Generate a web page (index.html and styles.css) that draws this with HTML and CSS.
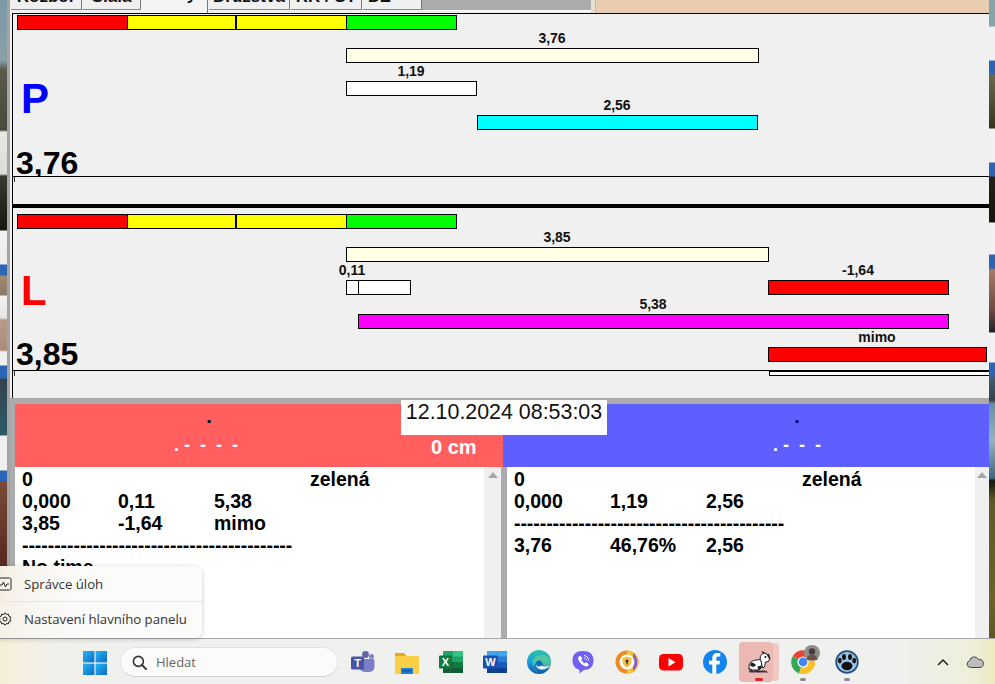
FILE: index.html
```html
<!DOCTYPE html>
<html lang="cs">
<head>
<meta charset="utf-8">
<title>Grafy</title>
<link rel="stylesheet" href="styles.css">
</head>
<body>
<div class="desktop">
  <div class="screen">
    <div class="wall wall-left"></div>
    <div class="app">
      <div class="tabs">
        <div class="tab t1">Rozbor</div>
        <div class="tab t2">Síala</div>
        <div class="tab t3 active">Grafy</div>
        <div class="tab t4">Družstva</div>
        <div class="tab t5">RR / ST</div>
        <div class="tab t6">DZ</div>
        <div class="tabs-fill"></div>
        <div class="tabs-grip"></div>
        <div class="tabs-peach"></div>
      </div>

      <section class="panel panel-p">
        <div class="gauge">
          <div class="g g-red"></div><div class="g g-yel1"></div><div class="g g-yel2"></div><div class="g g-grn"></div>
        </div>
        <div class="body">
          <div class="side">
            <div class="letter blue">P</div>
            <div class="value">3,76</div>
          </div>
          <div class="chart">
            <div class="row">
              <div class="seg" style="width:413px"><span class="lab">3,76</span><span class="bar cream"></span></div>
            </div>
            <div class="row">
              <div class="seg" style="width:131px"><span class="lab">1,19</span><span class="bar white"></span></div>
            </div>
            <div class="row tall">
              <div class="seg" style="margin-left:131px;width:281px"><span class="lab">2,56</span><span class="bar cyan"></span></div>
            </div>
          </div>
        </div>
        <div class="rule"><span class="tick"></span></div>
      </section>

      <div class="divider"></div>

      <section class="panel panel-l">
        <div class="gauge">
          <div class="g g-red"></div><div class="g g-yel1"></div><div class="g g-yel2"></div><div class="g g-grn"></div>
        </div>
        <div class="body">
          <div class="side">
            <div class="letter red">L</div>
            <div class="value">3,85</div>
          </div>
          <div class="chart">
            <div class="row">
              <div class="seg" style="width:423px"><span class="lab">3,85</span><span class="bar cream"></span></div>
            </div>
            <div class="row">
              <div class="seg" style="width:13px"><span class="lab">0,11</span><span class="bar white"></span></div>
              <div class="seg" style="margin-left:-1px;width:53px"><span class="lab"></span><span class="bar white"></span></div>
              <div class="seg" style="margin-left:357px;width:181px"><span class="lab">-1,64</span><span class="bar redbar"></span></div>
            </div>
            <div class="row tall">
              <div class="seg" style="margin-left:12px;width:591px"><span class="lab">5,38</span><span class="bar magenta"></span></div>
            </div>
            <div class="row">
              <div class="seg" style="margin-left:422px;width:219px"><span class="lab">mimo</span><span class="bar redbar"></span></div>
            </div>
          </div>
        </div>
        <div class="rule"><span class="tick"></span><span class="rule-bar"></span></div>
      </section>

      <div class="lower">
        <div class="heads">
          <div class="head head-red">
            <div class="h-dot">.</div>
            <div class="h-dash dash-red"><span>.</span><span class="dash-run">- - - -</span></div>
            <div class="h-cm">0 cm</div>
          </div>
          <div class="head head-blue">
            <div class="h-dot navy">.</div>
            <div class="h-dash"><span>.</span><span class="dash-run">- - -</span></div>
          </div>
        </div>
        <div class="panes">
          <div class="pane pane-left">
            <div class="txt">
              <div class="ln"><span>0</span><span></span><span></span><span>zelená</span></div>
              <div class="ln"><span>0,000</span><span>0,11</span><span>5,38</span></div>
              <div class="ln"><span>3,85</span><span>-1,64</span><span>mimo</span></div>
              <div class="ln"><span class="wide sep">------------------------------------------</span></div>
              <div class="ln"><span class="wide">No time</span></div>
            </div>
            <div class="scroll"><i class="arrow"></i></div>
          </div>
          <div class="pane pane-right">
            <div class="txt">
              <div class="ln"><span>0</span><span></span><span></span><span>zelená</span></div>
              <div class="ln"><span>0,000</span><span>1,19</span><span>2,56</span></div>
              <div class="ln"><span class="wide sep">------------------------------------------</span></div>
              <div class="ln"><span>3,76</span><span>46,76%</span><span>2,56</span></div>
            </div>
            <div class="scroll"><i class="arrow"></i></div>
          </div>
        </div>
      </div>

      <div class="clock">12.10.2024 08:53:03</div>
    </div>
    <div class="wall wall-right"></div>
  </div>

  <div class="taskbar">
    <svg class="win" viewBox="0 0 24 24">
      <defs>
        <linearGradient id="wg" x1="0" y1="0" x2="1" y2="1"><stop offset="0" stop-color="#29b6f6"/><stop offset="1" stop-color="#0a6cc4"/></linearGradient>
      </defs>
      <rect x="0" y="0" width="11.4" height="11.4" fill="url(#wg)"/>
      <rect x="12.6" y="0" width="11.4" height="11.4" fill="url(#wg)"/>
      <rect x="0" y="12.6" width="11.4" height="11.4" fill="url(#wg)"/>
      <rect x="12.6" y="12.6" width="11.4" height="11.4" fill="url(#wg)"/>
    </svg>
    <div class="search">
      <svg class="mag" viewBox="0 0 16 16"><circle cx="6.8" cy="6.8" r="5.3" fill="none" stroke="#333" stroke-width="1.7"/><path d="M10.7 10.7L15 15" stroke="#333" stroke-width="2" stroke-linecap="round"/></svg>
      <span class="search-text">Hledat</span>
    </div>
    <div class="apps">
      <div class="app-ico">
        <svg viewBox="0 0 24 24"><circle cx="14.5" cy="4.5" r="3.4" fill="#6264a7"/><circle cx="20.5" cy="6.5" r="2.5" fill="#7b83c9"/><path d="M8 9h13.5a2 2 0 0 1 2 2v6a5 5 0 0 1-5 5h-5a6 6 0 0 1-5.500-6z" fill="#7b7fc9"/><rect x="0" y="6.500" width="13" height="13" rx="1.500" fill="#4b53a8"/><text x="6.500" y="16.500" class="logo-t">T</text></svg>
      </div>
      <div class="app-ico">
        <svg viewBox="0 0 24 24"><path d="M0 3h9l2.500 3H24v3H0z" fill="#e3a81d"/><rect x="0" y="6" width="24" height="18" rx="1" fill="#fbcf45"/><rect x="6" y="18" width="12" height="6" rx="1" fill="#1a7fd4"/><rect x="8" y="20" width="8" height="1.300" fill="#0d4f9a"/></svg>
      </div>
      <div class="app-ico">
        <svg viewBox="0 0 24 24"><rect x="4" y="1" width="20" height="22" rx="1" fill="#21a366"/><rect x="14" y="1" width="10" height="5.500" fill="#33c481"/><rect x="14" y="12" width="10" height="5.500" fill="#107c41"/><rect x="4" y="12" width="10" height="11" fill="#185c37"/><rect x="14" y="17.500" width="10" height="5.500" fill="#0f5d32"/><rect x="0" y="5.500" width="13" height="13" rx="1" fill="#10793f"/><text x="6.500" y="16" class="logo-t">X</text></svg>
      </div>
      <div class="app-ico">
        <svg viewBox="0 0 24 24"><rect x="4" y="1" width="20" height="22" rx="1" fill="#2b7cd3"/><rect x="4" y="1" width="20" height="5.500" fill="#41a5ee"/><rect x="4" y="12" width="20" height="5.500" fill="#185abd"/><rect x="4" y="17.500" width="20" height="5.500" fill="#103f91"/><rect x="0" y="5.500" width="15" height="13" rx="1" fill="#1a50b0"/><text x="7.500" y="16" class="logo-t">W</text></svg>
      </div>
      <div class="app-ico">
        <svg viewBox="0 0 24 24">
          <defs><linearGradient id="eg" x1="0" y1="0" x2="0" y2="1"><stop offset="0" stop-color="#2cc6a0"/><stop offset=".5" stop-color="#1b9de2"/><stop offset="1" stop-color="#0c59a4"/></linearGradient></defs>
          <circle cx="12" cy="12" r="12" fill="url(#eg)"/>
          <path d="M24 13c0-5-4-8-9-8-6 0-9.500 4-9.500 8.500 0 3 2 7 7 9.500-5-1-7-5-5.500-8 1-2.500 4-3.500 6.500-3 2 .4 3.500 1.800 3 3.500h7.500z" fill="#7adf7a" opacity=".55"/>
          <path d="M9 14.500c0 3.500 3.500 5.500 7 5 3-.4 5.500-2 7-4-.5 0-2 1-4.500 1-3 0-4.800-.8-5-2.500z" fill="#fff" opacity=".95"/>
          <circle cx="12" cy="13.500" r="3" fill="#0e6cb6"/>
        </svg>
      </div>
      <div class="app-ico">
        <svg viewBox="0 0 24 24"><path d="M12 1c6.500 0 10.500 3 10.500 9.500S18.500 20 13 20l-4.500 3.500V20C4 18.500 1.500 15.500 1.500 10.500 1.500 4 5.500 1 12 1z" fill="#7360f2"/><path d="M7.800 6.500l1.500-.8 2 2.800-1 1.200c.5 1.500 2 3 3.500 3.500l1.200-1 2.800 2-.8 1.500c-.6.8-1.500 1-2.500.6-4-1.500-6.500-4-7.300-7.300-.2-1 .1-1.900.6-2.500z" fill="#fff"/><path d="M13 5.500c2.500.3 4.500 2 4.800 5M13 7.800c1.300.2 2.300 1.200 2.500 2.500" fill="none" stroke="#fff" stroke-width=".9"/></svg>
      </div>
      <div class="app-ico">
        <svg viewBox="0 0 24 24">
          <circle cx="12" cy="12" r="11.500" fill="#f08a24"/>
          <path d="M12 .5A11.500 11.500 0 0 1 23.500 12 11.500 11.500 0 0 1 12 23.500z" fill="#f3c33a"/>
          <path d="M18 3a11.500 11.500 0 0 1 0 18z" fill="#8a5cc7"/>
          <circle cx="12" cy="12" r="7.500" fill="#fff"/>
          <path d="M12 6.500l4.500 1.500v3.500c0 3-2 5-4.500 6-2.500-1-4.500-3-4.500-6V8z" fill="#f3c33a"/>
          <circle cx="12" cy="11" r="1.500" fill="#3a2a7a"/><rect x="11.400" y="11" width="1.200" height="3.500" fill="#3a2a7a"/>
        </svg>
      </div>
      <div class="app-ico">
        <svg viewBox="0 0 24 24"><rect x="0" y="4" width="24" height="16.500" rx="4.500" fill="#f00"/><path d="M9.500 8l7 4.200-7 4.200z" fill="#fff"/></svg>
      </div>
      <div class="app-ico">
        <svg viewBox="0 0 24 24"><circle cx="12" cy="12" r="12" fill="#1684ee"/><path d="M13.300 24V14.500h3.200l.6-3.800h-3.800V8.300c0-1.100.4-1.900 2-1.900h2V3.100c-.4 0-1.600-.2-3-.2-3 0-5 1.800-5 5.100v2.700H6v3.800h3.300V24z" fill="#fff"/></svg>
      </div>
      <div class="app-ico app-active">
        <i class="stack"></i>
        <svg class="dog" viewBox="0 0 24 24">
          <path d="M1.500 20.500h17l3 2h-19z" fill="#3a3a3a"/>
          <path d="M2 16c0-3 3-5.500 7-6l5-.5 1 7.500-3 3H4c-1.500 0-2-2-2-4z" fill="#fff" stroke="#222" stroke-width="1"/>
          <path d="M14 11c-2-4 0-7.500 3.500-8l2.500 1 2.500 5-1 2.500-3 .5-1 5-2 1z" fill="#fff" stroke="#222" stroke-width="1"/>
          <path d="M16 4.500L14.500 .8l3.500 2zM20 4l2.500 5 1-.3L22 4z" fill="#222"/>
          <path d="M4 12.500c2 0 4 .8 5 3l-3 1.500-3-1.500zM10.500 16.500l3.500-1v3l-3 1z" fill="#222"/>
          <circle cx="18.500" cy="7" r="1" fill="#111"/>
          <path d="M5 20l-3.500-1.500M9 20l3 2" stroke="#222" stroke-width="1.200" fill="none"/>
        </svg>
        <i class="run run-red"></i>
      </div>
      <div class="app-ico">
        <svg viewBox="0 0 24 24">
          <path d="M12 12L1.800 6.200A12 12 0 0 1 22.800 6.700z" fill="#ea4335"/>
          <path d="M12 12L1.800 6.200A12 12 0 0 0 8 23.400z" fill="#34a853"/>
          <path d="M12 12l10.800-5.300A12 12 0 0 1 8 23.400z" fill="#fbc02d"/>
          <circle cx="12" cy="12" r="5.600" fill="#fff"/>
          <circle cx="12" cy="12" r="4.400" fill="#4285f4"/>
        </svg>
        <svg class="badge" viewBox="0 0 16 16"><circle cx="8" cy="8" r="8" fill="#8d8d90"/><circle cx="8" cy="6.500" r="3.200" fill="#4a3a38"/><path d="M2.500 15c.5-4 3-5.500 5.500-5.500s5 1.500 5.500 5.500z" fill="#6b5250"/></svg>
        <i class="run"></i>
      </div>
      <div class="app-ico">
        <svg viewBox="0 0 24 24">
          <circle cx="12" cy="12" r="11.700" fill="#234f86"/>
          <circle cx="12" cy="12" r="10" fill="#9cc4e4"/>
          <ellipse cx="12" cy="16" rx="5.500" ry="4.200" fill="#111"/>
          <ellipse cx="4.800" cy="10.500" rx="1.900" ry="2.700" fill="#111"/>
          <ellipse cx="9" cy="7" rx="2" ry="3" fill="#111"/>
          <ellipse cx="15" cy="7" rx="2" ry="3" fill="#111"/>
          <ellipse cx="19.200" cy="10.500" rx="1.900" ry="2.700" fill="#111"/>
        </svg>
        <i class="run"></i>
      </div>
    </div>
    <div class="tray">
      <svg class="chev" viewBox="0 0 12 8"><path d="M1 7l5-5 5 5" fill="none" stroke="#222" stroke-width="1.500"/></svg>
      <svg class="cloud" viewBox="0 0 18 12"><path d="M4.500 11.500A3.500 3.500 0 0 1 3.500 4.700 4.800 4.800 0 0 1 12.500 3.500 3.900 3.900 0 0 1 14 11.500z" fill="#bdbdbd" stroke="#444" stroke-width="1"/></svg>
    </div>
  </div>

  <div class="menu">
    <div class="menu-item">
      <svg class="menu-ico" viewBox="0 0 14 14"><rect x="-3" y="1" width="14" height="12" rx="1.500" fill="none" stroke="#222"/><path d="M-1 8h3l1.500-3 2 5 1.500-3h2" fill="none" stroke="#222"/></svg>
      <span>Správce úloh</span>
    </div>
    <div class="menu-item">
      <svg class="menu-ico" viewBox="0 0 14 14"><circle cx="5" cy="7" r="2" fill="none" stroke="#222"/><path d="M5 .8l1.300 1.700 2.100-.4.500 2.100 2 .9-1 1.900 1 1.900-2 .9-.5 2.100-2.100-.4L5 13.200l-1.300-1.700-2.100.4-.5-2.100-2-.9 1-1.900-1-1.900 2-.9.500-2.100 2.100.4z" fill="none" stroke="#222"/></svg>
      <span>Nastavení hlavního panelu</span>
    </div>
  </div>
</div>
</body>
</html>
```

FILE: styles.css
```css
* { box-sizing: border-box; }
html, body { margin: 0; padding: 0; }
body { width: 995px; height: 684px; overflow: hidden; background: #f0f0ee; font-family: "Liberation Sans", Arial, sans-serif; color: #000; }
.desktop { position: relative; width: 995px; height: 684px; overflow: hidden; display: flex; flex-direction: column; }
.screen { display: flex; height: 638px; flex: none; }

.wall { flex: none; height: 638px; }
.wall-left {
  width: 7px;
  background: linear-gradient(180deg,
    #7b9aa6 0, #8a9fa8 60px, #59594a 70px, #4a4a3c 130px,
    #e8e8e4 132px, #dcdcd6 174px, #3a3a30 176px, #17170f 230px,
    #f2f2f2 231px, #ececec 264px, #2b66b4 265px, #2b66b4 275px,
    #a08a70 276px, #8c7a66 295px, #f2f2f2 296px, #e8e4e0 318px,
    #b89a88 320px, #a88c7a 350px, #f0f0f0 352px, #f0f0f0 365px,
    #2b66b4 366px, #2b66b4 378px, #33424c 379px, #2c5a68 435px,
    #f0f0f0 436px, #f0f0f0 470px, #2b66b4 471px, #2b66b4 481px,
    #7a4a3a 482px, #5a2a20 560px, #3a3a30 638px);
}
.wall-right {
  width: 6px;
  background: linear-gradient(180deg,
    #7fa6a8 0, #7fa6a8 26px, #eef0f0 27px, #eef0f0 60px,
    #2a66b8 61px, #2a66b8 74px, #6a6a50 75px, #35351c 128px,
    #f2f2f2 129px, #f2f2f2 162px, #2a66b8 163px, #2a66b8 176px,
    #222218 177px, #14140c 222px, #f2f2f2 223px, #f2f2f2 254px,
    #2a66b8 255px, #2a66b8 268px, #a87a68 270px, #6a4a40 310px, #22222a 332px,
    #f2f2f2 333px, #f2f2f2 362px, #2a66b8 363px, #2a66b8 376px,
    #3e5e72 377px, #33424c 400px, #5f93a8 404px, #8fb4c4 440px, #3c6a80 478px,
    #131a10 481px, #5c5a24 500px, #6a6428 600px, #5a5820 638px);
}

.app { position: relative; flex: none; width: 982px; height: 638px; background: #f0f0f0; border-left: 3px solid #a4a4a4; display: flex; flex-direction: column; }

/* tabs, cut off by the top of the screen */
.tabs { display: flex; align-items: flex-start; height: 13px; flex: none; overflow: hidden; background: #f0f0f0; }
.tab { flex: none; height: 10px; display: flex; align-items: flex-end; justify-content: center; padding-bottom: 2px; font-weight: 700; font-size: 17px; line-height: 20px; background: #f0f0f0; color: #111; border-right: 1px solid #777; border-bottom: 1px solid #8a8a8a; }
.tab.active { height: 13px; padding-bottom: 8px; border-bottom: 0; background: #f4f4f4; }
.t1 { margin-left: 1px; width: 71px; }
.t2 { margin-left: 1px; width: 58px; }
.t3 { width: 67px; }
.t4 { margin-left: 1px; width: 81px; }
.t5 { margin-left: 1px; width: 71px; }
.t6 { margin-left: 1px; width: 59px; justify-content: flex-start; padding-left: 5px; }
.tabs-fill { flex: none; width: 169px; height: 11px; background: #ababab; border-bottom: 1px solid #fff; }
.tabs-grip { flex: none; width: 5px; height: 13px; background: #e6e0d4; border-right: 1px solid #bbb; }
.tabs-peach { flex: 1; height: 13px; background: #e8cdb0; }

/* charts */
.panel { flex: none; margin-left: 2px; border-left: 1px solid #000; background: #f0f0f0; display: flex; flex-direction: column; }
.panel-p { height: 191px; border-top: 1px solid #000; padding-top: 1px; }
.panel-l { height: 190px; padding-top: 6px; }
.divider { flex: none; height: 4px; margin-left: 2px; background: #000; }

.gauge { display: flex; flex: none; height: 15px; margin-left: 4px; }
.g { flex: none; height: 15px; border: 1px solid #000; }
.g-red { width: 111px; background: #f00; }
.g-yel1 { width: 109px; margin-left: -1px; background: #ff0; }
.g-yel2 { width: 111px; background: #ff0; }
.g-grn { width: 111px; margin-left: -1px; background: #0f0; }

.body { display: flex; flex: none; overflow: hidden; }
.panel-p .body { height: 146px; }
.panel-l .body { height: 141px; }
.side { flex: none; width: 333px; display: flex; flex-direction: column; }
.letter { font-weight: 700; font-size: 42px; line-height: 44px; margin-left: 8px; }
.panel-p .letter { margin-top: 47px; }
.panel-l .letter { margin-top: 40px; }
.blue { color: #00f; }
.red { color: #f00; }
.value { margin-top: auto; margin-left: 3px; font-weight: 700; font-size: 32px; line-height: 32px; }
.panel-p .value { margin-bottom: -3px; }
.panel-l .value { margin-bottom: 0; }

.chart { flex: 1; min-width: 0; }
.row { display: flex; height: 33px; }
.row.tall { height: 34px; }
.seg { flex: none; display: flex; flex-direction: column; align-items: center; justify-content: flex-end; }
.lab { flex: 1; display: flex; align-items: center; white-space: nowrap; font-weight: 700; font-size: 14px; line-height: 16px; padding: 0 1px 2px 0; color: #111; }
.bar { flex: none; display: block; width: 100%; height: 15px; border: 1px solid #000; }
.cream { background: #ffffe6; }
.white { background: #fff; }
.cyan { background: #0ff; }
.magenta { background: #f0f; }
.redbar { background: #f00; }

.rule { position: relative; flex: 1; border-top: 1px solid #000; }
.tick { position: absolute; left: 1px; top: 0; width: 1px; height: 5px; background: #333; }
.rule-bar { position: absolute; left: 756px; right: 0; top: -1px; height: 6px; background: #fff; border: 1px solid #000; border-top-width: 2px; border-right: 0; }

/* lower part */
.lower { flex: 1; min-height: 0; background: #ababab; padding: 6px 0 0 5px; display: flex; flex-direction: column; }
.heads { display: flex; flex: none; height: 63px; }
.head { position: relative; flex: none; height: 63px; display: flex; flex-direction: column; align-items: center; font-weight: 700; }
.head-red { width: 488px; background: #ff5f5f; padding-right: 100px; }
.head-blue { width: 486px; background: #5f5fff; padding-left: 102px; }
.h-dot { font-size: 20px; line-height: 20px; height: 20px; margin-top: 2px; color: #000; }
.navy { color: #00005a; }
.h-dash { font-size: 18px; line-height: 18px; margin-top: 10px; color: #fff; word-spacing: 5px; font-weight: 700; }
.dash-run { margin-left: 5px; }
.dash-red { padding-right: 6px; }
.h-cm { position: absolute; left: 416px; top: 32px; color: #fff; font-size: 20px; line-height: 22px; }

.panes { flex: 1; min-height: 0; display: flex; }
.pane { display: flex; min-width: 0; background: #fff; overflow: hidden; }
.pane-left { flex: none; width: 486px; }
.pane-right { flex: none; width: 482px; margin-left: 6px; }
.txt { flex: 1; min-width: 0; padding: 1px 0 0 7px; font-weight: 700; font-size: 19.500px; line-height: 22px; overflow: hidden; }
.ln { display: grid; grid-template-columns: 96px 96px 96px 96px; height: 22px; white-space: nowrap; }
.wide { grid-column: 1 / 5; }
.sep { letter-spacing: -.06px; }
.scroll { flex: none; width: 17px; background: #f0f0f0; display: flex; justify-content: center; padding-top: 5px; }
.pane-right .scroll { width: 14px; }
.arrow { display: block; width: 0; height: 0; border-left: 5px solid transparent; border-right: 5px solid transparent; border-bottom: 6px solid #a6a6a6; }

.clock { position: absolute; left: 391px; top: 400px; width: 206px; height: 35px; background: #fff; font-size: 21.400px; line-height: 25px; text-align: center; padding-bottom: 10px; color: #111; }

/* taskbar */
.taskbar { flex: none; height: 46px; display: flex; align-items: flex-start; border-top: 1px solid #a8a8a8; padding-left: 83px;
  background: linear-gradient(90deg, #f6efd8 0, #f2f0e8 40px, #f0f0ee 110px, #f0f0ee 900px, #eeeed8 975px, #ece9bc 995px); }
.win { flex: none; width: 24px; height: 24px; margin-top: 12px; }
.search { flex: none; width: 218px; height: 30px; margin: 8px 0 0 13px; border-radius: 15px; background: #fbfbfa; border: 1px solid #e2e2e2; border-bottom-color: #cfcfcf; display: flex; align-items: center; padding-left: 11px; }
.mag { width: 15px; height: 15px; flex: none; }
.search-text { margin-left: 9px; font-family: "Open Sans", sans-serif; font-size: 13px; color: #666; }
.apps { flex: none; display: flex; margin-left: 3px; }
.app-ico { position: relative; flex: none; width: 44px; height: 45px; display: flex; justify-content: center; padding-top: 11px; }
.app-ico > svg:first-child, .app-ico > .dog { width: 24px; height: 24px; }
.app-active .dog { position: relative; z-index: 1; }
.app-active::before { content: ""; position: absolute; left: 2px; top: 3px; width: 34px; height: 40px; border-radius: 4px; background: #ecb8b4; }
.stack { position: absolute; left: 36px; top: 4px; width: 6px; height: 38px; border-radius: 0 4px 4px 0; background: #f0c8c4; }
.badge { position: absolute; left: 23px; top: 6px; width: 16px; height: 16px; }
.run { position: absolute; left: 19px; top: 39px; width: 6px; height: 3px; border-radius: 2px; background: #8a8a92; }
.run-red { background: #d8232a; left: 18px; width: 8px; z-index: 1; }
.tray { flex: none; display: flex; align-items: center; height: 45px; margin-left: 68px; }
.chev { width: 12px; height: 8px; flex: none; }
.cloud { width: 18px; height: 12px; flex: none; margin-left: 17px; }

/* context menu */
.menu { position: absolute; left: -8px; top: 566px; width: 210px; height: 72px; border-radius: 8px; background: linear-gradient(90deg, #f5eee2 0, #f8f5ef 30px, #fbfbfa 90px); box-shadow: 0 1px 5px rgba(0,0,0,.22); display: flex; flex-direction: column; font-family: "Open Sans", sans-serif; font-size: 13.200px; color: #333; }
.menu-item { flex: none; height: 35px; display: flex; align-items: center; padding-left: 8px; }
.menu-item + .menu-item { height: 37px; border-top: 1px solid #e6e6e4; padding-bottom: 3px; }
.menu-ico { flex: none; width: 14px; height: 14px; margin: 0 10px 0 0; overflow: visible; }
.menu-item span { white-space: nowrap; }
.logo-t { font-family: "Liberation Sans", sans-serif; font-weight: 700; font-size: 11px; fill: #fff; text-anchor: middle; }
```
